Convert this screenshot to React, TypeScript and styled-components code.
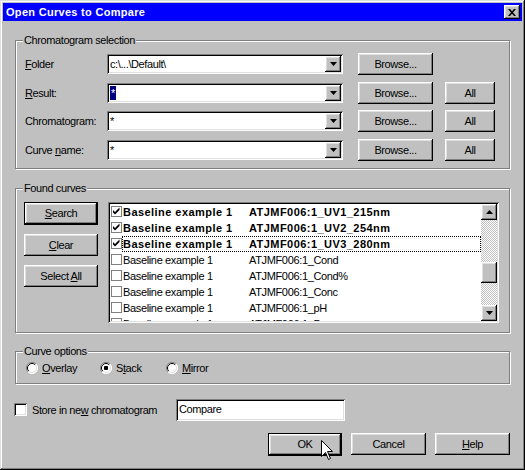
import React from 'react';
import styled, { createGlobalStyle, css } from 'styled-components';

const GlobalStyle = createGlobalStyle`
  html, body {
    margin: 0;
    padding: 0;
    background: #c0c0c0;
  }
  body {
    font-family: "Liberation Sans", Arial, sans-serif;
    font-size: 11px;
    letter-spacing: -0.4px;
    color: #000;
  }
`;

const raised = css`
  box-shadow: inset -1px -1px #000, inset 1px 1px #fff, inset -2px -2px #808080, inset 2px 2px #dfdfdf;
`;

const sunken = css`
  box-shadow: inset 1px 1px #808080, inset -1px -1px #fff, inset 2px 2px #000, inset -2px -2px #dfdfdf;
`;

const Window = styled.div`
  width: 525px;
  height: 470px;
  box-sizing: border-box;
  padding: 3px;
  background: #c0c0c0;
  box-shadow: inset -1px -1px #000, inset 1px 1px #dfdfdf, inset -2px -2px #808080, inset 2px 2px #fff;
  display: flex;
  flex-direction: column;
`;

const TitleBar = styled.div`
  height: 18px;
  background: #0000ff;
  display: flex;
  align-items: center;
  padding: 0 2px 0 3px;
`;

const TitleText = styled.div`
  flex: 1;
  color: #fff;
  font-weight: bold;
  letter-spacing: 0.3px;
  line-height: 18px;
`;

const CloseButton = styled.div`
  width: 16px;
  height: 14px;
  background: #c0c0c0;
  ${raised};
  display: flex;
  align-items: center;
  justify-content: center;
`;

const Body = styled.div`
  padding: 19px 12px 0 12px;
  display: flex;
  flex-direction: column;
`;

const Group = styled.div<{ $top: number; $padBottom: number }>`
  margin-top: ${p => p.$top}px;
  border: 1px solid #808080;
  box-shadow: inset 1px 1px #fff, 1px 1px #fff;
  padding: 0 8px ${p => p.$padBottom}px 8px;
  display: flex;
  flex-direction: column;
`;

const Legend = styled.div`
  align-self: flex-start;
  margin: -7px 0 0 -1px;
  padding: 0 1px;
  line-height: 13px;
  height: 13px;
  background: #c0c0c0;
`;

const SelectionRows = styled.div`
  margin-top: 6px;
  display: flex;
  flex-direction: column;
  gap: 6.67px;
`;

const SelectionRow = styled.div`
  height: 22px;
  display: flex;
  align-items: center;
`;

const FieldLabel = styled.div`
  width: 82px;
  padding-left: 1px;
`;

const Combo = styled.div`
  width: 236px;
  height: 20px;
  box-sizing: border-box;
  background: #fff;
  ${sunken};
  display: flex;
  align-items: stretch;
  padding: 2px;
`;

const ComboText = styled.div`
  flex: 1;
  padding-left: 1px;
  line-height: 16px;
  white-space: nowrap;
  overflow: hidden;
`;

const Selected = styled.span`
  background: #000080;
  color: #fff;
  padding: 0 1px;
  display: inline-block;
  height: 14px;
  line-height: 14px;
  margin-top: 1px;
`;

const ArrowButton = styled.div`
  width: 16px;
  background: #c0c0c0;
  ${raised};
  display: flex;
  align-items: center;
  justify-content: center;
`;

const PushButton = styled.div<{ $width: number; $default?: boolean; $gap?: number }>`
  width: ${p => p.$width}px;
  height: ${p => (p.$default ? 23 : 22)}px;
  margin-left: ${p => p.$gap ?? 0}px;
  box-sizing: border-box;
  background: #c0c0c0;
  display: flex;
  align-items: center;
  justify-content: center;
  position: relative;
  ${p =>
    p.$default
      ? css`
          border: 1px solid #000;
        `
      : ''}
  ${raised};
`;

const FoundContent = styled.div`
  margin-top: 7px;
  display: flex;
  align-items: flex-start;
`;

const ButtonColumn = styled.div`
  width: 74px;
  display: flex;
  flex-direction: column;
  gap: 9px;
`;

const ListBox = styled.div`
  margin-left: 10px;
  width: 391px;
  height: 121px;
  box-sizing: border-box;
  padding: 2px;
  background: #fff;
  ${sunken};
  display: flex;
  overflow: hidden;
`;

const ListRows = styled.div`
  flex: 1;
  overflow: hidden;
`;

const ListRow = styled.div<{ $bold?: boolean }>`
  height: 16px;
  display: flex;
  align-items: center;
  font-weight: ${p => (p.$bold ? 'bold' : 'normal')};
  letter-spacing: ${p => (p.$bold ? '0.45px' : '-0.35px')};
  white-space: nowrap;
`;

const ListCheck = styled.div`
  margin-left: 1px;
  width: 11px;
  height: 11px;
  display: flex;
`;

const RowCell = styled.div<{ $focused?: boolean }>`
  flex: 1;
  height: 16px;
  box-sizing: border-box;
  border: 1px ${p => (p.$focused ? 'dotted #000' : 'solid transparent')};
  display: flex;
  align-items: center;
`;

const NameCol = styled.div`
  width: 126px;
`;

const ScrollBar = styled.div`
  width: 16px;
  display: flex;
  flex-direction: column;
  background: repeating-conic-gradient(#c0c0c0 0 25%, #fff 0 50%) 0 0 / 2px 2px;
`;

const ScrollButton = styled.div`
  width: 16px;
  height: 16px;
  flex: none;
  background: #c0c0c0;
  ${raised};
  display: flex;
  align-items: center;
  justify-content: center;
`;

const ScrollTrack = styled.div`
  flex: 1;
  display: flex;
  flex-direction: column;
`;

const ScrollThumb = styled.div`
  margin-top: 42px;
  height: 21px;
  background: #c0c0c0;
  ${raised};
`;

const RadioRow = styled.div`
  margin-top: 3px;
  height: 14px;
  display: flex;
  align-items: center;
  padding-left: 2px;
`;

const RadioOption = styled.div<{ $width: number }>`
  width: ${p => p.$width}px;
  display: flex;
  align-items: center;
  gap: 4px;
`;

const StoreRow = styled.div`
  margin-top: 15px;
  height: 22px;
  display: flex;
  align-items: center;
`;

const Check3D = styled.div`
  margin-left: -1px;
  width: 13px;
  height: 13px;
  box-sizing: border-box;
  background: #fff;
  ${sunken};
`;

const StoreLabel = styled.div`
  margin-left: 5px;
  width: 144px;
  margin-top: 1px;
`;

const TextBox = styled.div`
  width: 169px;
  height: 22px;
  box-sizing: border-box;
  background: #fff;
  ${sunken};
  padding: 3px 3px;
  line-height: 14px;
`;

const DialogButtons = styled.div`
  margin-top: 12px;
  display: flex;
  justify-content: flex-end;
`;

const Cursor = styled.svg`
  position: absolute;
  left: 52px;
  top: 6px;
`;

const DownArrow = () => (
  <svg width="7" height="4" viewBox="0 0 7 4">
    <path d="M0 0H7L3.5 4Z" fill="#000" />
  </svg>
);

const UpArrow = () => (
  <svg width="7" height="4" viewBox="0 0 7 4">
    <path d="M0 4H7L3.5 0Z" fill="#000" />
  </svg>
);

const CheckMark = ({ checked }: { checked: boolean }) => (
  <svg width="11" height="11" viewBox="0 0 11 11">
    <rect x="0.5" y="0.5" width="10" height="10" fill="#fff" stroke="#808080" />
    {checked && <path d="M2 4L4 6L8.5 1.5V4L4 8.5L2 6.5Z" fill="#000" />}
  </svg>
);

const Radio = ({ checked }: { checked: boolean }) => (
  <svg width="12" height="12" viewBox="0 0 12 12">
    <circle cx="6" cy="6" r="5.5" fill="#fff" />
    <path d="M10 2A5.5 5.5 0 0 0 2 10" fill="none" stroke="#808080" strokeWidth="1" />
    <path d="M2 10A5.5 5.5 0 0 0 10 2" fill="none" stroke="#fff" strokeWidth="1" />
    <path d="M9.2 2.8A4.5 4.5 0 0 0 2.8 9.2" fill="none" stroke="#000" strokeWidth="1" />
    <path d="M2.8 9.2A4.5 4.5 0 0 0 9.2 2.8" fill="none" stroke="#dfdfdf" strokeWidth="1" />
    {checked && <rect x="4" y="4" width="4" height="4" rx="1" fill="#000" />}
  </svg>
);

const curves = [
  { checked: true, name: 'ATJMF006:1_UV1_215nm' },
  { checked: true, name: 'ATJMF006:1_UV2_254nm' },
  { checked: true, name: 'ATJMF006:1_UV3_280nm', focused: true },
  { checked: false, name: 'ATJMF006:1_Cond' },
  { checked: false, name: 'ATJMF006:1_Cond%' },
  { checked: false, name: 'ATJMF006:1_Conc' },
  { checked: false, name: 'ATJMF006:1_pH' },
  { checked: false, name: 'ATJMF006:1_Pressure' },
];

const selection = [
  { label: <><u>F</u>older</>, value: 'c:\\...\\Default\\', all: false },
  { label: <><u>R</u>esult:</>, value: '*', all: true, selected: true },
  { label: <>Chromatogram:</>, value: '*', all: true },
  { label: <>Curve <u>n</u>ame:</>, value: '*', all: true },
];

export default function App() {
  return (
    <>
      <GlobalStyle />
      <Window>
        <TitleBar>
          <TitleText>Open Curves to Compare</TitleText>
          <CloseButton>
            <svg width="8" height="7" viewBox="0 0 8 7">
              <path d="M0 0H2L4 2.2L6 0H8L5 3.5L8 7H6L4 4.8L2 7H0L3 3.5Z" fill="#000" />
            </svg>
          </CloseButton>
        </TitleBar>
        <Body>
          <Group $top={0} $padBottom={7}>
            <Legend>Chromatogram selection</Legend>
            <SelectionRows>
              {selection.map((row, i) => (
                <SelectionRow key={i}>
                  <FieldLabel>{row.label}</FieldLabel>
                  <Combo>
                    <ComboText>
                      {row.selected ? <Selected>{row.value}</Selected> : row.value}
                    </ComboText>
                    <ArrowButton>
                      <DownArrow />
                    </ArrowButton>
                  </Combo>
                  <PushButton $width={75} $gap={15}>Browse...</PushButton>
                  {row.all && <PushButton $width={50} $gap={12}>All</PushButton>}
                </SelectionRow>
              ))}
            </SelectionRows>
          </Group>

          <Group $top={19} $padBottom={9}>
            <Legend>Found curves</Legend>
            <FoundContent>
              <ButtonColumn>
                <PushButton $width={74} $default>
                  <span><u>S</u>earch</span>
                </PushButton>
                <PushButton $width={74}>
                  <span><u>C</u>lear</span>
                </PushButton>
                <PushButton $width={74}>
                  <span>Select <u>A</u>ll</span>
                </PushButton>
              </ButtonColumn>
              <ListBox>
                <ListRows>
                  {curves.map(c => (
                    <ListRow key={c.name} $bold={c.checked}>
                      <ListCheck>
                        <CheckMark checked={c.checked} />
                      </ListCheck>
                      <RowCell $focused={c.focused}>
                        <NameCol>Baseline example 1</NameCol>
                        <div>{c.name}</div>
                      </RowCell>
                    </ListRow>
                  ))}
                </ListRows>
                <ScrollBar>
                  <ScrollButton>
                    <UpArrow />
                  </ScrollButton>
                  <ScrollTrack>
                    <ScrollThumb />
                  </ScrollTrack>
                  <ScrollButton>
                    <DownArrow />
                  </ScrollButton>
                </ScrollBar>
              </ListBox>
            </FoundContent>
          </Group>

          <Group $top={18} $padBottom={8}>
            <Legend>Curve options</Legend>
            <RadioRow>
              <RadioOption $width={74}>
                <Radio checked={false} />
                <span><u>O</u>verlay</span>
              </RadioOption>
              <RadioOption $width={66}>
                <Radio checked />
                <span>S<u>t</u>ack</span>
              </RadioOption>
              <RadioOption $width={80}>
                <Radio checked={false} />
                <span><u>M</u>irror</span>
              </RadioOption>
            </RadioRow>
          </Group>

          <StoreRow>
            <Check3D />
            <StoreLabel>Store in ne<u>w</u> chromatogram</StoreLabel>
            <TextBox>Compare</TextBox>
          </StoreRow>

          <DialogButtons>
            <PushButton $width={74} $default>
              OK
              <Cursor width="12" height="20" viewBox="0 0 12 20">
                <path
                  d="M0.5 0.5V16.5L4.5 12.5L7.5 19.5L9.5 18.5L6.5 11.5H11.5Z"
                  fill="#fff"
                  stroke="#000"
                  strokeWidth="1"
                />
              </Cursor>
            </PushButton>
            <PushButton $width={75} $gap={9}>Cancel</PushButton>
            <PushButton $width={75} $gap={9}>
              <span><u>H</u>elp</span>
            </PushButton>
          </DialogButtons>
        </Body>
      </Window>
    </>
  );
}
